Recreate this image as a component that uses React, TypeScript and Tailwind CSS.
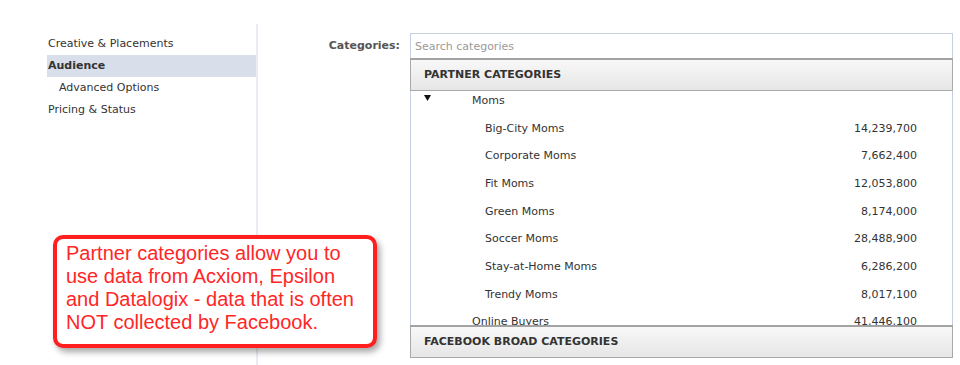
const navItems = [
  { label: 'Creative & Placements', active: false, sub: false },
  { label: 'Audience', active: true, sub: false },
  { label: 'Advanced Options', active: false, sub: true },
  { label: 'Pricing & Status', active: false, sub: false },
];

const moms = [
  { name: 'Big-City Moms', count: '14,239,700' },
  { name: 'Corporate Moms', count: '7,662,400' },
  { name: 'Fit Moms', count: '12,053,800' },
  { name: 'Green Moms', count: '8,174,000' },
  { name: 'Soccer Moms', count: '28,488,900' },
  { name: 'Stay-at-Home Moms', count: '6,286,200' },
  { name: 'Trendy Moms', count: '8,017,100' },
];

function SectionHeader({ title }: { title: string }) {
  return (
    <div className="flex h-[33px] items-center border border-[#a9a9a9] border-t-2 border-t-[#a3a3a3] bg-gradient-to-b from-[#f8f8f8] to-[#e6e6e6] px-[13px] text-[11px] font-bold text-[#333]">
      {title}
    </div>
  );
}

export default function App() {
  return (
    <div className="relative h-[365px] w-[960px] overflow-hidden bg-white font-['DejaVu_Sans',sans-serif] text-[11px] text-[#333]">
      <div className="flex h-full">
        <nav className="w-[256px] shrink-0 pt-[33px]">
          {navItems.map((item) => (
            <div
              key={item.label}
              className={`flex h-[22px] items-center ${item.sub ? 'pl-[59px]' : 'pl-[48px]'} ${
                item.active ? 'ml-[47px] bg-[#d8dfea] pl-px font-bold text-[#333]' : ''
              }`}
            >
              {item.label}
            </div>
          ))}
        </nav>
        <div className="mt-[24px] w-[2px] shrink-0 bg-[#e9ecf2]" />

        <main className="flex flex-1 pt-[33px]">
          <div className="w-[152px] shrink-0 pr-[10px] pt-[5px] text-right font-bold text-[#555]">Categories:</div>
          <div className="w-[543px]">
            <div className="flex h-[25px] items-center border border-b-0 border-[#c6d0e0] px-[4px] pt-[2px] text-[#9a9a9a]">
              Search categories
            </div>
            <SectionHeader title="PARTNER CATEGORIES" />
            <div className="h-[234px] overflow-hidden border-x border-[#c6d0e0]">
              <div className="flex h-[20px] items-center">
                <svg width="7" height="6" viewBox="0 0 7 6" className="ml-[13px] -mt-[6px]">
                  <path d="M0 0 L7 0 L3.5 6 Z" fill="#111" />
                </svg>
                <span className="ml-[41px]">Moms</span>
              </div>
              <div className="mt-[4px]">
                {moms.map((m) => (
                  <div key={m.name} className="flex h-[27.7px] items-center justify-between pl-[74px] pr-[35px]">
                    <span>{m.name}</span>
                    <span>{m.count}</span>
                  </div>
                ))}
                <div className="flex h-[27.7px] items-center justify-between pl-[61px] pr-[35px]">
                  <span>Online Buyers</span>
                  <span>41,446,100</span>
                </div>
              </div>
            </div>
            <SectionHeader title="FACEBOOK BROAD CATEGORIES" />
          </div>
        </main>
      </div>

      <div className="absolute left-[53px] top-[235px] h-[113px] w-[324px] rounded-[10px] border-4 border-[#ff1f1f] bg-white pl-[9px] pt-[3px] font-['Liberation_Sans',Arial,sans-serif] text-[20px] leading-[23px] text-[#ff2626] shadow-[3px_4px_6px_rgba(0,0,0,0.35)]">
        Partner categories allow you to
        <br />
        use data from Acxiom, Epsilon
        <br />
        and Datalogix - data that is often
        <br />
        NOT collected by Facebook.
      </div>
    </div>
  );
}
